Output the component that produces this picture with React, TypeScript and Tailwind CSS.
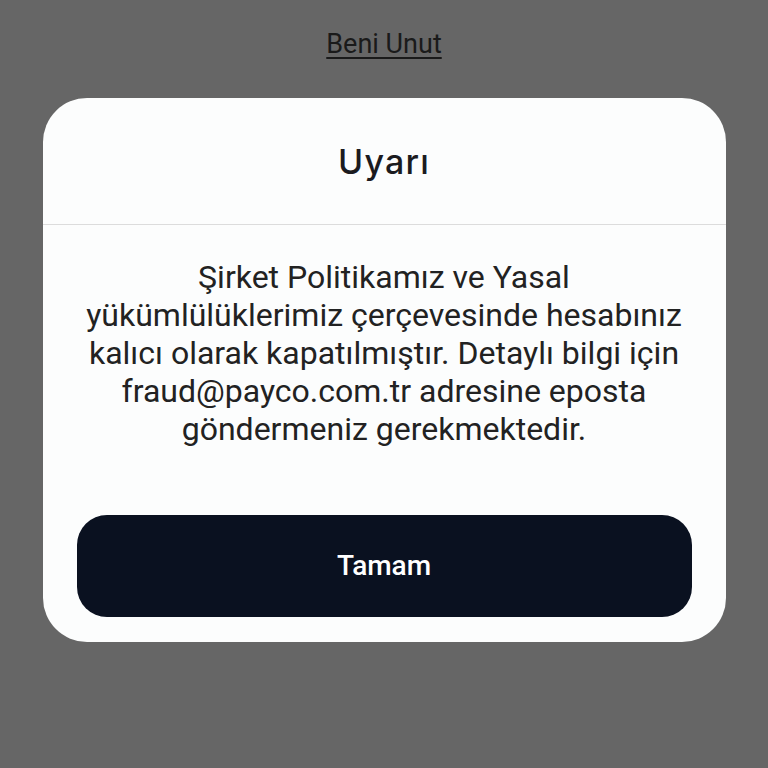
export default function App() {
  return (
    <div className="min-h-screen w-full bg-[#666666] flex flex-col items-center" style={{ fontFamily: "Roboto, 'Liberation Sans', sans-serif" }}>
      <div className="pt-[26px] h-[98px]">
        <span className="text-[27px] leading-[36px] text-[#1a1a1a] underline underline-offset-[4px] decoration-[1.5px]">Beni Unut</span>
      </div>
      <div className="w-[683px] bg-[#fcfdfd] rounded-[44px] flex flex-col">
        <div className="h-[127px] border-b border-[#dcdcdc] flex items-center justify-center">
          <span className="text-[34px] font-medium text-[#1b1b1f] tracking-[1.2px]" style={{ fontFamily: "Inter, sans-serif" }}>Uyarı</span>
        </div>
        <div className="px-[34px] pt-[33px] text-center text-[32px] leading-[38px] text-[#222222]">
          Şirket Politikamız ve Yasal yükümlülüklerimiz çerçevesinde hesabınız kalıcı olarak kapatılmıştır. Detaylı bilgi için fraud@payco.com.tr adresine eposta göndermeniz gerekmektedir.
        </div>
        <div className="px-[34px] pt-[67px] pb-[25px]">
          <button className="w-full h-[102px] rounded-[30px] bg-[#0a1120] text-white text-[28px] font-medium">Tamam</button>
        </div>
      </div>
    </div>
  );
}
